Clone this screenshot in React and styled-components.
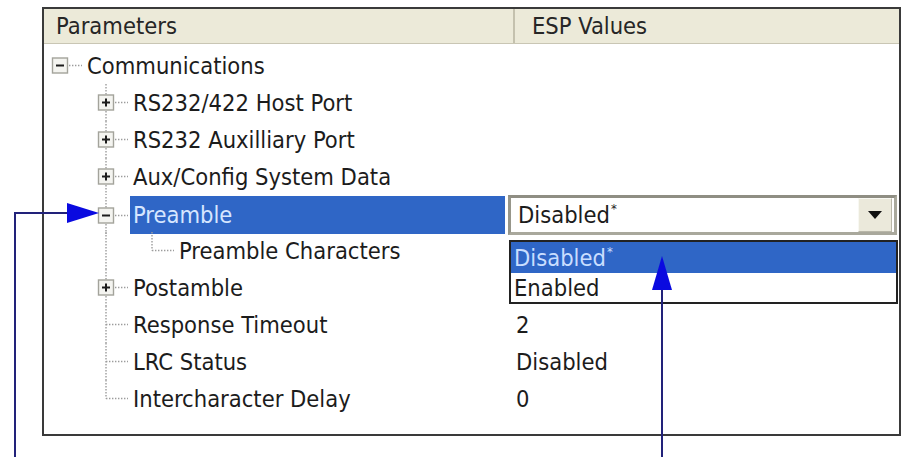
import styled, { createGlobalStyle } from 'styled-components';

const GlobalStyle = createGlobalStyle`
  html, body {
    margin: 0;
    padding: 0;
    background: #fff;
  }
  body {
    font-family: "DejaVu Sans Condensed", "DejaVu Sans", sans-serif;
    font-stretch: condensed;
    color: #1c1c1c;
  }
`;

const ROW_H = 37;

const Stage = styled.div`
  position: relative;
  width: 904px;
  height: 457px;
  box-sizing: border-box;
  padding: 7px 0 0 42px;
  overflow: hidden;
`;

const Grid = styled.div`
  width: 859px;
  height: 429px;
  box-sizing: border-box;
  border: 2px solid #3a3a3a;
  background: #fff;
`;

const Header = styled.div`
  display: grid;
  grid-template-columns: 471px 1fr;
  height: 34px;
  background: #ecead9;
  border-bottom: 1px solid #c9c6b4;
`;

const HeaderCell = styled.div`
  display: flex;
  align-items: center;
  padding-left: ${p => p.$pad}px;
  font-size: 23.5px;
  color: #262626;
  border-right: ${p => (p.$divider ? '2px solid #c4c1ae' : 'none')};
`;

const Body = styled.div`
  padding-top: 3px;
`;

const Row = styled.div`
  display: grid;
  grid-template-columns: 471px 1fr;
  height: ${ROW_H}px;
  align-items: center;
  font-size: 23.5px;
`;

const NameCell = styled.div`
  display: flex;
  align-items: center;
  height: 100%;
`;

const Gutter = styled.svg`
  flex: none;
  display: block;
`;

const Label = styled.div`
  flex: ${p => (p.$selected ? 1 : 'none')};
  margin-right: ${p => (p.$selected ? 10 : 0)}px;
  height: ${p => (p.$selected ? '38px' : 'auto')};
  display: flex;
  align-items: center;
  padding: 0 3px;
  background: ${p => (p.$selected ? '#2f66c6' : 'transparent')};
  color: ${p => (p.$selected ? '#d6e6ff' : '#1c1c1c')};
  white-space: nowrap;
`;

const ValueCell = styled.div`
  display: flex;
  align-items: center;
  height: 100%;
  padding-left: 1px;
  white-space: nowrap;
`;

const ComboWrap = styled.div`
  position: relative;
  margin-left: -8px;
  width: 389px;
`;

const Combo = styled.div`
  height: 40px;
  box-sizing: border-box;
  border: 3px solid #a9a89c;
  border-top-color: #8f8e83;
  border-left-color: #97968a;
  background: #fff;
  display: flex;
  align-items: center;
  justify-content: space-between;
  padding: 0 2px 0 7px;
`;

const Star = styled.span`
  font-size: 13px;
  vertical-align: 0.75em;
  margin-left: 1px;
`;

const DropButton = styled.div`
  width: 34px;
  height: 34px;
  box-sizing: border-box;
  background: #ebe9db;
  border: 1px solid #f8f8f2;
  border-right-color: #b9b7a9;
  border-bottom-color: #b9b7a9;
  display: flex;
  align-items: center;
  justify-content: center;
`;

const DropList = styled.div`
  position: absolute;
  top: 45px;
  left: 1px;
  width: 389px;
  box-sizing: border-box;
  border: 2px solid #222;
  background: #fff;
  z-index: 1;
`;

const Option = styled.div`
  height: ${p => p.$h}px;
  display: flex;
  align-items: center;
  padding-left: 3px;
  background: ${p => (p.$active ? '#2f66c6' : '#fff')};
  color: ${p => (p.$active ? '#c9deff' : '#1c1c1c')};
`;

const Annotations = styled.svg`
  position: absolute;
  left: 0;
  top: 0;
  pointer-events: none;
  z-index: 2;
`;

const rows = [
  { label: 'Communications', level: 0, toggle: 'minus' },
  { label: 'RS232/422 Host Port', level: 1, toggle: 'plus' },
  { label: 'RS232 Auxilliary Port', level: 1, toggle: 'plus' },
  { label: 'Aux/Config System Data', level: 1, toggle: 'plus' },
  { label: 'Preamble', level: 1, toggle: 'minus', selected: true, combo: true },
  { label: 'Preamble Characters', level: 2 },
  { label: 'Postamble', level: 1, toggle: 'plus' },
  { label: 'Response Timeout', level: 1, value: '2' },
  { label: 'LRC Status', level: 1, value: 'Disabled' },
  { label: 'Intercharacter Delay', level: 1, value: '0', last: true },
];

const DOT = { stroke: '#9c9c9c', strokeWidth: 1.4, strokeDasharray: '1.4 1.6' };

const TreeLines = ({ level, toggle, last }) => {
  const cx = 16 + 46 * level;
  const w = cx + 24;
  const mid = ROW_H / 2;
  return (
    <Gutter width={w} height={ROW_H} viewBox={`0 0 ${w} ${ROW_H}`}>
      {level >= 1 && <line x1="62" y1="0" x2="62" y2={last ? mid : ROW_H} {...DOT} />}
      {level === 2 && <line x1={cx} y1="0" x2={cx} y2={mid} {...DOT} />}
      <line x1={cx} y1={mid} x2={w - 2} y2={mid} {...DOT} />
      {toggle && (
        <g>
          <rect x={cx - 7.5} y={mid - 7.5} width="15" height="15" fill="#f4f4f0" stroke="#a3a39b" strokeWidth="1.4" />
          <line x1={cx - 4} y1={mid} x2={cx + 4} y2={mid} stroke="#1c1c1c" strokeWidth="2" />
          {toggle === 'plus' && <line x1={cx} y1={mid - 4} x2={cx} y2={mid + 4} stroke="#1c1c1c" strokeWidth="2" />}
        </g>
      )}
    </Gutter>
  );
};

const Disabled = () => (
  <span>
    Disabled<Star>*</Star>
  </span>
);

const PreambleCombo = () => (
  <ComboWrap>
    <Combo>
      <Disabled />
      <DropButton>
        <svg width="14" height="8" viewBox="0 0 14 8">
          <path d="M0 0 H14 L7 8 Z" fill="#111" />
        </svg>
      </DropButton>
    </Combo>
    <DropList>
      <Option $h={31} $active>
        <Disabled />
      </Option>
      <Option $h={29}>Enabled</Option>
    </DropList>
  </ComboWrap>
);

export default function App() {
  return (
    <>
      <GlobalStyle />
      <Stage>
        <Grid>
          <Header>
            <HeaderCell $pad={12} $divider>Parameters</HeaderCell>
            <HeaderCell $pad={17}>ESP Values</HeaderCell>
          </Header>
          <Body>
            {rows.map(r => (
              <Row key={r.label}>
                <NameCell>
                  <TreeLines level={r.level} toggle={r.toggle} last={r.last} />
                  <Label $selected={r.selected}>{r.label}</Label>
                </NameCell>
                <ValueCell>{r.combo ? <PreambleCombo /> : r.value}</ValueCell>
              </Row>
            ))}
          </Body>
        </Grid>
        <Annotations width="904" height="457" viewBox="0 0 904 457">
          <polyline points="15,457 15,213 72,213" fill="none" stroke="#22227a" strokeWidth="2" />
          <path d="M67 203 L99 213 L67 223 Z" fill="#0a0ae0" />
          <line x1="662" y1="457" x2="662" y2="286" stroke="#22227a" strokeWidth="2" />
          <path d="M652 290 L662 256 L672 290 Z" fill="#0a0ae0" />
        </Annotations>
      </Stage>
    </>
  );
}
